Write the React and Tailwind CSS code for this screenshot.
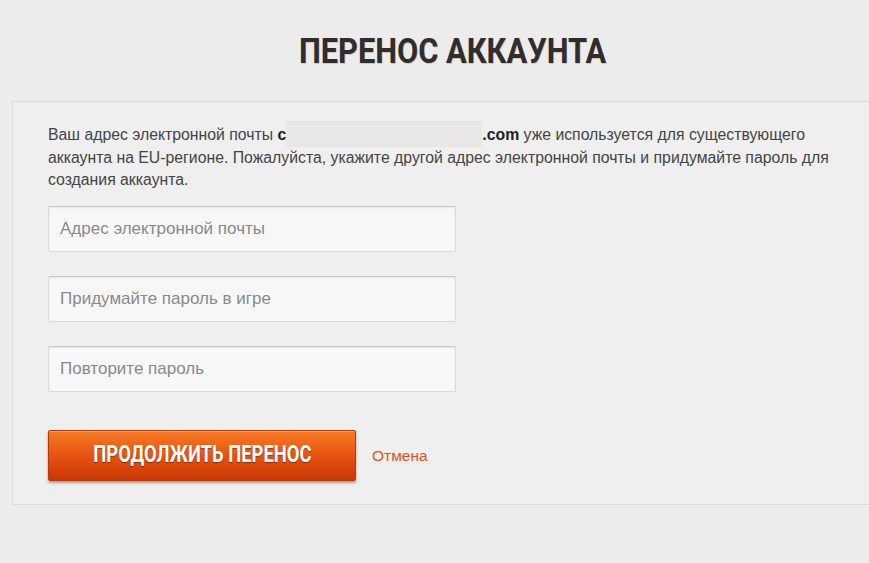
export default function App() {
  const cond = { fontFamily: 'Roboto, "Liberation Sans", sans-serif' };
  const inputs = ["Адрес электронной почты", "Придумайте пароль в игре", "Повторите пароль"];
  return (
    <div className="h-[563px] w-[869px] overflow-hidden bg-[#ececec]" style={{ fontFamily: '"Liberation Sans", Arial, sans-serif' }}>
      <div className="h-[101px] pt-[32px] pl-[37px] text-center">
        <h1
          className="inline-block origin-center scale-x-[0.88] text-[35px] font-bold leading-[40px] text-[#2e2e2e] [text-shadow:1px_1px_0_rgba(200,150,90,0.45)]"
          style={cond}
        >
          ПЕРЕНОС АККАУНТА
        </h1>
      </div>
      <div className="ml-[12px] w-[880px] h-[404px] border border-[#dcdcdc] bg-[#efefef] pl-[35px] pt-[19px]">
        <p className="w-[785px] text-[15.8px] leading-[22px] text-[#444]">
          Ваш адрес электронной почты <b className="text-[#222]">c</b>
          <span className="inline-block align-[-7px] w-[196px] h-[26px] bg-[#e8e7e6]" />
          <b className="text-[#222]">.com</b> уже используется для существующего аккаунта на EU-регионе. Пожалуйста, укажите другой адрес электронной почты и придумайте пароль для создания аккаунта.
        </p>
        <div className="mt-[15px] flex flex-col gap-[24px]">
          {inputs.map((p) => (
            <div
              key={p}
              className="flex h-[46px] w-[408px] items-center rounded-[2px] border border-[#dadada] border-t-[#c8c8c8] bg-[#f8f8f8] pl-[11px] text-[17px] text-[#8a8a8a] shadow-[inset_0_1px_2px_rgba(0,0,0,0.08)]"
            >
              {p}
            </div>
          ))}
        </div>
        <div className="mt-[38px] flex items-center gap-[16px]">
          <button className="h-[51px] w-[308px] rounded-[2px] border border-[#b8380a] bg-gradient-to-b from-[#f57a24] via-[#e85310] to-[#c73706] shadow-[0_2px_3px_rgba(0,0,0,0.35),inset_0_1px_0_rgba(255,200,120,0.6)]">
            <span
              className="inline-block scale-x-[0.8] text-[23px] font-bold text-white [text-shadow:0_1px_1px_rgba(120,30,0,0.7)]"
              style={cond}
            >
              ПРОДОЛЖИТЬ ПЕРЕНОС
            </span>
          </button>
          <span className="text-[15.5px] text-[#e5531a]">Отмена</span>
        </div>
      </div>
    </div>
  );
}
